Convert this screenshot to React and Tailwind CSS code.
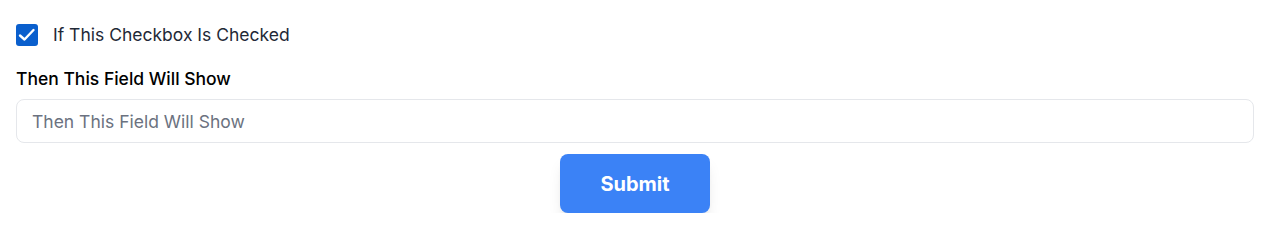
export default function App() {
  return (
    <div className="pl-4 pr-[11px] pt-4 bg-white" style={{ fontFamily: "Inter, 'Noto Sans', sans-serif" }}>
      <label className="flex items-center gap-[15px] h-[22px] mt-2">
        <span className="w-[22px] h-[22px] rounded-[3px] bg-[#0a5fcd] flex items-center justify-center">
          <svg width="22" height="22" viewBox="0 0 22 22" fill="none">
            <path d="M4 11.5 L8.5 15.5 L17.5 6" stroke="white" strokeWidth="2.4" strokeLinecap="round" strokeLinejoin="round" />
          </svg>
        </span>
        <span className="text-[17.5px] leading-[22px] text-[#1f2937]">If This Checkbox Is Checked</span>
      </label>
      <div className="mt-[20px] text-[17.5px] font-medium text-black leading-[26px]">Then This Field Will Show</div>
      <input
        className="mt-[7px] block w-full h-[44px] border border-[#e5e7eb] rounded-lg px-[15px] text-[17.5px] outline-none placeholder:text-[#6b7280]"
        placeholder="Then This Field Will Show"
      />
      <div className="flex justify-center mt-[11px]">
        <button className="w-[150px] h-[59px] rounded-lg bg-[#3b82f6] text-white font-bold text-[20px] shadow-lg">
          Submit
        </button>
      </div>
    </div>
  );
}
